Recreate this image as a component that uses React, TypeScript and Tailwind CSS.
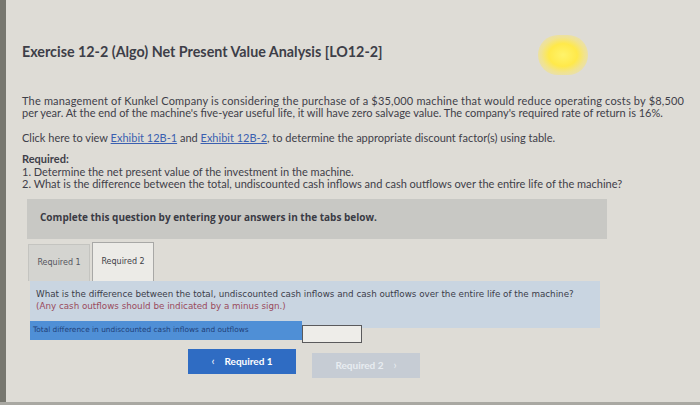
import React from "react";

export default function App() {
  return (
    <div className="relative w-[700px] h-[405px] overflow-hidden bg-[#dedcd6] flex" style={{ fontFamily: "Lato, 'Open Sans', sans-serif" }}>
      <div className="w-[6px] h-full bg-[#77776f]" />
      <div className="flex-1 flex flex-col pl-[16px] pr-[10px]">
        <div className="mt-[41px] text-[14.3px] font-bold text-[#3d3e48]">
          Exercise 12-2 (Algo) Net Present Value Analysis [LO12-2]
        </div>
        <div className="mt-[33px] text-[11px] leading-[12px] text-[#3e4049] whitespace-nowrap">
          <div className="tracking-[0.18px]">The management of Kunkel Company is considering the purchase of a $35,000 machine that would reduce operating costs by $8,500</div>
          <div>per year. At the end of the machine's five-year useful life, it will have zero salvage value. The company's required rate of return is 16%.</div>
        </div>
        <div className="mt-[13px] text-[11px] leading-[12px] text-[#3e4049]">
          Click here to view <span className="text-[#3a5fb0] underline">Exhibit 12B-1</span> and <span className="text-[#3a5fb0] underline">Exhibit 12B-2</span>, to determine the appropriate discount factor(s) using table.
        </div>
        <div className="mt-[9px] text-[11px] leading-[12.5px] text-[#3e4049]">
          <div className="font-bold">Required:</div>
          <div>1. Determine the net present value of the investment in the machine.</div>
          <div>2. What is the difference between the total, undiscounted cash inflows and cash outflows over the entire life of the machine?</div>
        </div>
        <div className="mt-[8px] ml-[5px] w-[580px] h-[40px] bg-[#c8c8c4] flex items-start pt-[11px] pl-[13px]">
          <span className="text-[10px] font-bold text-[#3a3b44]" style={{ fontFamily: "'Open Sans', sans-serif" }}>
            Complete this question by entering your answers in the tabs below.
          </span>
        </div>
        <div className="ml-[6px] mt-[3px] flex items-end" style={{ fontFamily: "'DejaVu Sans', sans-serif" }}>
          <div className="w-[62px] h-[37px] bg-[#d4d4d0] border border-[#c4c4c0] border-b-0 flex items-start justify-center pt-[12px] text-[8px] text-[#55565e]">
            Required 1
          </div>
          <div className="ml-[2px] w-[62px] h-[39px] bg-[#ecebe7] border border-[#a8a8a6] border-b-0 flex items-start justify-center pt-[13px] text-[8px] text-[#3e3f48]">
            Required 2
          </div>
        </div>
        <div className="ml-[8px] w-[570px] h-[47px] bg-[#c9d5e1] pt-[7px] pl-[6px] text-[8.75px] leading-[12px]" style={{ fontFamily: "'DejaVu Sans', sans-serif" }}>
          <div className="text-[#3b3d4a]">What is the difference between the total, undiscounted cash inflows and cash outflows over the entire life of the machine?</div>
          <div className="text-[#9a4a5c]">(Any cash outflows should be indicated by a minus sign.)</div>
        </div>
        <div className="ml-[8px] -mt-[7px] flex items-start">
          <div className="w-[272px] h-[19px] bg-[#4f8fd6] pl-[3px] pt-[3px] text-[7.4px] text-[#1f3f78]" style={{ fontFamily: "'DejaVu Sans', sans-serif" }}>
            Total difference in undiscounted cash inflows and outflows
          </div>
          <div className="mt-[4px] w-[60px] h-[18px] bg-[#eeede9] border border-[#5a5a5c]" />
        </div>
        <div className="mt-[6px] ml-[166px] flex items-start">
          <div className="w-[108px] h-[25px] bg-[#2f6cc3] flex items-center justify-center gap-[10px] text-white text-[10px] font-bold">
            <span className="text-[11px] font-normal">‹</span>
            <span>Required 1</span>
          </div>
          <div className="mt-[4px] ml-[16px] w-[108px] h-[25px] bg-[#c6ccd4] flex items-center justify-center gap-[10px] text-[#e8ecf1] text-[10px] font-bold">
            <span>Required 2</span>
            <span className="text-[11px] font-normal">›</span>
          </div>
        </div>
      </div>
      <div className="absolute left-0 bottom-0 w-full h-[3px] bg-[#a9a8a2]" />
      <div className="absolute left-[538px] top-[35px] w-[50px] h-[40px] rounded-full" style={{ background: "radial-gradient(ellipse at center, #fff36a 0%, #ffe94a 40%, rgba(255,232,90,0.55) 62%, rgba(221,220,214,0) 100%)" }} />
    </div>
  );
}
